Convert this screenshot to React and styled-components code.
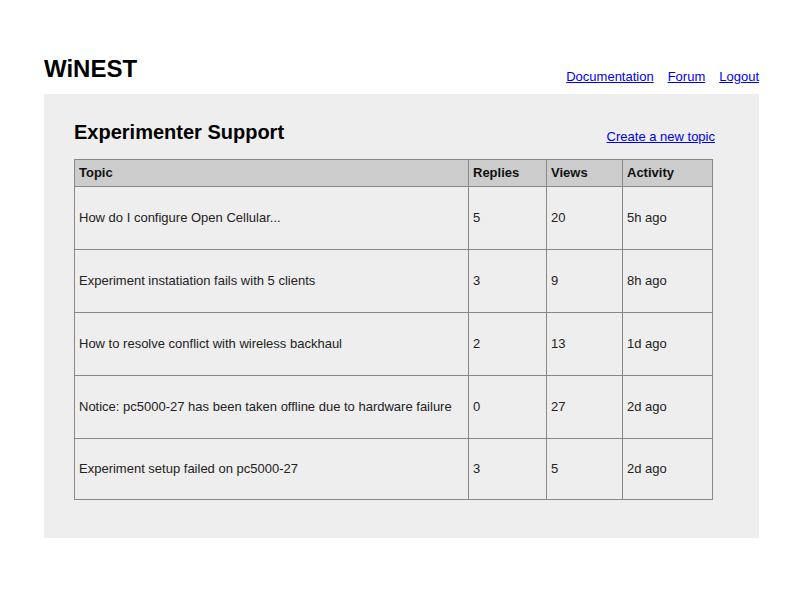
import React from 'react'
import styled, { createGlobalStyle } from 'styled-components'

const GlobalStyle = createGlobalStyle`
  body {
    margin: 0;
    background: #fff;
    font-family: "Liberation Sans", Arial, sans-serif;
  }
`

const Page = styled.div`
  width: 715px;
  padding: 52px 0 0 44px;
`

const Header = styled.header`
  display: flex;
  justify-content: space-between;
  align-items: flex-end;
  height: 42px;
`

const Logo = styled.h1`
  margin: 0 0 8px;
  font-size: 24px;
  line-height: 34px;
  font-weight: bold;
  color: #000;
`

const Nav = styled.nav`
  display: flex;
  gap: 14px;
  padding-bottom: 10px;
`

const NavLink = styled.a`
  color: #0000ee;
  font-size: 13px;
  text-decoration: underline;
`

const Panel = styled.main`
  background: #eeeeee;
  padding: 20px 44px 38px 30px;
`

const TitleRow = styled.div`
  display: flex;
  justify-content: space-between;
  align-items: flex-end;
  height: 45px;
`

const Title = styled.h2`
  margin: 0 0 9px;
  font-size: 20px;
  line-height: 36px;
  font-weight: bold;
  color: #000;
`

const CreateLink = styled(NavLink)`
  padding-bottom: 15px;
`

const Table = styled.table`
  width: 638px;
  table-layout: fixed;
  border-collapse: collapse;
  font-size: 13px;
  color: #222;
`

const Th = styled.th`
  width: ${p => p.$w}px;
  height: 24px;
  padding: 0 4px 2px;
  text-align: left;
  background: #cccccc;
  border: 1px solid #888;
  font-weight: bold;
  color: #111;
`

const Td = styled.td`
  height: 60px;
  padding: 0 4px 2px;
  border: 1px solid #888;
  vertical-align: middle;
  tr:last-child > & {
    height: 58px;
  }
`

const topics = [
  { title: 'How do I configure Open Cellular...', replies: 5, views: 20, activity: '5h ago' },
  { title: 'Experiment instatiation fails with 5 clients', replies: 3, views: 9, activity: '8h ago' },
  { title: 'How to resolve conflict with wireless backhaul', replies: 2, views: 13, activity: '1d ago' },
  { title: 'Notice: pc5000-27 has been taken offline due to hardware failure', replies: 0, views: 27, activity: '2d ago' },
  { title: 'Experiment setup failed on pc5000-27', replies: 3, views: 5, activity: '2d ago' },
]

const App = () => {
  return (
    <Page>
      <GlobalStyle />
      <Header>
        <Logo>WiNEST</Logo>
        <Nav>
          <NavLink href="#">Documentation</NavLink>
          <NavLink href="#">Forum</NavLink>
          <NavLink href="#">Logout</NavLink>
        </Nav>
      </Header>
      <Panel>
        <TitleRow>
          <Title>Experimenter Support</Title>
          <CreateLink href="#">Create a new topic</CreateLink>
        </TitleRow>
        <Table>
          <thead>
            <tr>
              <Th $w={385}>Topic</Th>
              <Th $w={69}>Replies</Th>
              <Th $w={67}>Views</Th>
              <Th $w={81}>Activity</Th>
            </tr>
          </thead>
          <tbody>
            {topics.map((t, i) => (
              <tr key={i}>
                <Td>{t.title}</Td>
                <Td>{t.replies}</Td>
                <Td>{t.views}</Td>
                <Td>{t.activity}</Td>
              </tr>
            ))}
          </tbody>
        </Table>
      </Panel>
    </Page>
  )
}

export default App
